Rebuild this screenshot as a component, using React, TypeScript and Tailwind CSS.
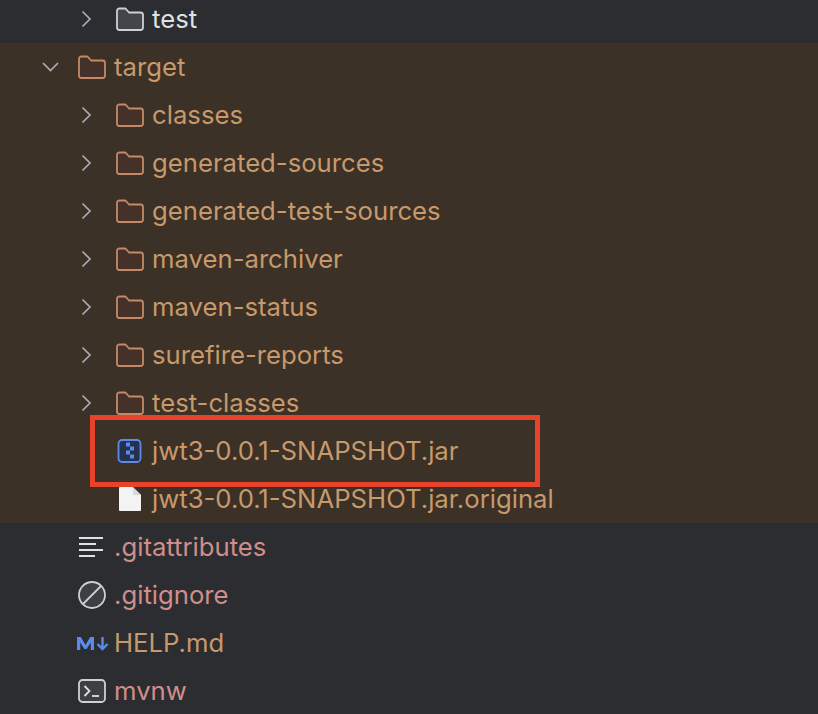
import type { ReactNode } from 'react';

const FONT = "font-['Inter','Liberation_Sans',sans-serif]";

function Chevron({ open }: { open?: boolean }) {
  return (
    <svg width="40" height="24" viewBox="0 0 40 24" fill="none" className="shrink-0">
      {open ? (
        <path d="M5 8 L12.5 15.5 L20 8" stroke="#a8adb5" strokeWidth="1.7" />
      ) : (
        <path d="M6.5 4.5 L14 12 L6.5 19.5" stroke="#a8adb5" strokeWidth="1.7" />
      )}
    </svg>
  );
}

function Folder({ stroke, fill }: { stroke: string; fill: string }) {
  return (
    <svg width="28" height="24" viewBox="0 0 28 24" fill="none">
      <path
        d="M1 4 A2.5 2.5 0 0 1 3.5 1.5 H9.5 L13 5.5 H24.5 A2.5 2.5 0 0 1 27 8 V20.5 A2.5 2.5 0 0 1 24.5 23 H3.5 A2.5 2.5 0 0 1 1 20.5 Z"
        fill={fill}
        stroke={stroke}
        strokeWidth="1.8"
        strokeLinejoin="round"
      />
    </svg>
  );
}

function JarIcon() {
  return (
    <svg width="28" height="24" viewBox="0 0 28 24" fill="none">
      <rect x="2.5" y="1" width="22" height="22" rx="3.5" fill="#25324d" stroke="#5c8aeb" strokeWidth="1.8" />
      <rect x="10" y="3.5" width="4" height="4" fill="#5c8aeb" />
      <rect x="14" y="7.5" width="4" height="4" fill="#5c8aeb" />
      <rect x="10" y="11.5" width="4" height="4" fill="#5c8aeb" />
      <rect x="14" y="15.5" width="4" height="4" fill="#5c8aeb" />
    </svg>
  );
}

function FileIcon() {
  return (
    <svg width="28" height="26" viewBox="0 0 28 26" fill="none">
      <path d="M3 2 A1 1 0 0 1 4 1 H16.5 L25 9 V24 A1 1 0 0 1 24 25 H4 A1 1 0 0 1 3 24 Z" fill="#f3f3f3" />
      <path d="M17 1 L25 9 H18 A1 1 0 0 1 17 8 Z" fill="#d9d9d9" />
    </svg>
  );
}

function LinesIcon() {
  return (
    <svg width="28" height="24" viewBox="0 0 28 24" fill="none" stroke="#dfe1e5" strokeWidth="1.8">
      <path d="M1 3 H25 M1 9 H18 M1 15 H25 M1 21 H17" />
    </svg>
  );
}

function IgnoreIcon() {
  return (
    <svg width="28" height="28" viewBox="0 0 28 28" fill="none" stroke="#ced0d6" strokeWidth="1.8">
      <circle cx="14" cy="14" r="13" fill="#3d3f43" />
      <path d="M5 23 L23 5" />
    </svg>
  );
}

function MarkdownIcon() {
  return (
    <svg width="36" height="18" viewBox="0 0 36 18" fill="none" className="-ml-[4px] shrink-0">
      <path d="M3 16 V3 H6.8 L11.5 11 L16.2 3 H20 V16 H16.8 V8.5 L12.6 15 H10.4 L6.2 8.5 V16 Z" fill="#5c8aeb" />
      <path d="M28.5 3 V15 M23.5 10 L28.5 15 L33.5 10" stroke="#5c8aeb" strokeWidth="2.4" />
    </svg>
  );
}

function TerminalIcon() {
  return (
    <svg width="28" height="24" viewBox="0 0 28 24" fill="none">
      <rect x="1" y="1" width="26" height="22" rx="3.5" fill="#3d3f43" stroke="#ced0d6" strokeWidth="1.8" />
      <path d="M6.5 7 L11.5 12 L6.5 17" stroke="#dfe1e5" strokeWidth="1.8" />
      <path d="M14 17 H21" stroke="#dfe1e5" strokeWidth="1.8" />
    </svg>
  );
}

function Row({
  icon,
  label,
  color,
  level,
  chevron,
  open,
}: {
  icon: ReactNode;
  label: string;
  color: string;
  level: 0 | 1;
  chevron?: boolean;
  open?: boolean;
}) {
  return (
    <div className={`flex h-[48px] items-center ${level === 1 ? 'pl-[76px]' : 'pl-[38px]'}`}>
      <div className="w-[40px] shrink-0">{chevron && <Chevron open={open} />}</div>
      <div className="flex w-[36px] shrink-0 items-center">{icon}</div>
      <span className={`whitespace-nowrap text-[25.7px] leading-none ${color}`}>{label}</span>
    </div>
  );
}

const TAN = 'text-[#c8996b]';
const PINK = 'text-[#d18d8a]';
const orangeFolder = <Folder stroke="#c58a65" fill="#44322a" />;
const targetChildren = [
  'classes',
  'generated-sources',
  'generated-test-sources',
  'maven-archiver',
  'maven-status',
  'surefire-reports',
  'test-classes',
];

export default function App() {
  return (
    <div className={`relative h-[714px] w-[818px] overflow-hidden bg-[#2b2d30] ${FONT}`}>
      <div className="-mt-[5px]">
        <Row level={1} chevron icon={<Folder stroke="#ced0d6" fill="#43454a" />} label="test" color="text-[#dfe1e5]" />
      </div>
      <div className="bg-[#3b3127]">
        <Row level={0} chevron open icon={orangeFolder} label="target" color={TAN} />
        {targetChildren.map((name) => (
          <Row key={name} level={1} chevron icon={orangeFolder} label={name} color={TAN} />
        ))}
        <Row level={1} icon={<JarIcon />} label="jwt3-0.0.1-SNAPSHOT.jar" color={TAN} />
        <Row level={1} icon={<FileIcon />} label="jwt3-0.0.1-SNAPSHOT.jar.original" color={TAN} />
      </div>
      <Row level={0} icon={<LinesIcon />} label=".gitattributes" color={PINK} />
      <Row level={0} icon={<IgnoreIcon />} label=".gitignore" color={PINK} />
      <Row level={0} icon={<MarkdownIcon />} label="HELP.md" color={TAN} />
      <Row level={0} icon={<TerminalIcon />} label="mvnw" color={PINK} />
      <div className="absolute left-[90px] top-[415px] h-[72px] w-[450px] border-[5px] border-[#e8432a]" />
    </div>
  );
}
